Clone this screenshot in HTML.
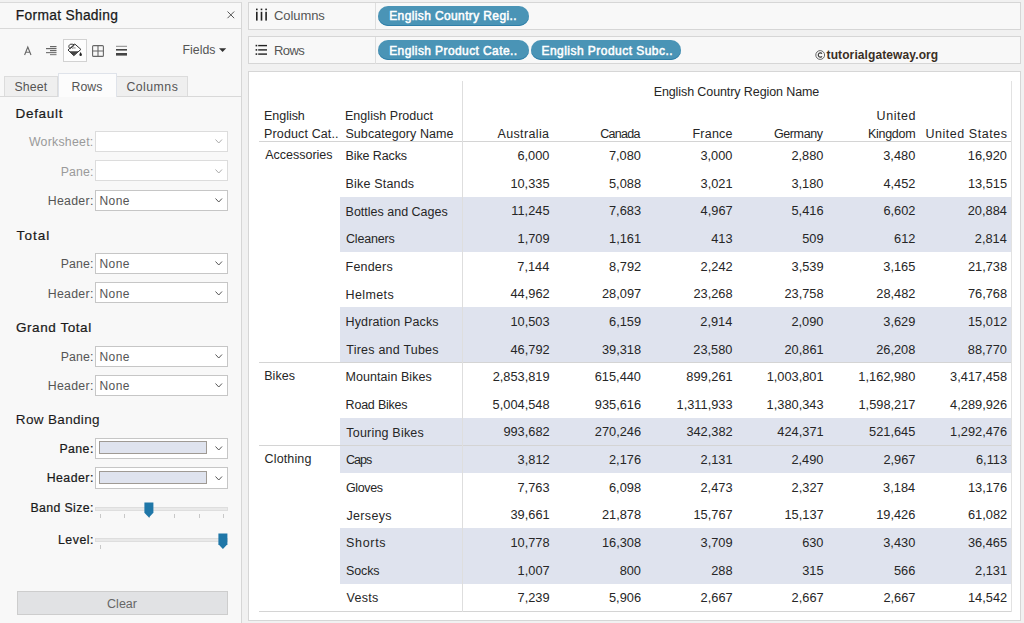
<!DOCTYPE html>
<html><head><meta charset="utf-8"><style>
html,body{margin:0;padding:0;}
body{width:1024px;height:623px;position:relative;overflow:hidden;background:#f1f1f1;font-family:"Liberation Sans", sans-serif;}
.t{position:absolute;white-space:nowrap;font-family:"Liberation Sans", sans-serif;}
.b{position:absolute;}
</style></head><body>
<div class="b" style="left:0px;top:1.5px;width:242.00px;height:621.50px;background:#f8f8f8;border-top:1px solid #dadada;border-right:1px solid #d6d6d6;box-sizing:border-box;"></div><div class="b" style="left:0px;top:28px;width:241.00px;height:1.00px;background:#d9d9d9;"></div><div class="t" style="left:15.86px;top:8.54px;font-size:13.8px;line-height:13.8px;color:#1a1a1a;font-weight:400;letter-spacing:0.293px;-webkit-text-stroke:0.25px #1a1a1a;">Format Shading</div><svg class="b" style="left:226px;top:10px" width="10" height="10" viewBox="0 0 10 10"><path d="M1.5 1.5L8.2 8.2M8.2 1.5L1.5 8.2" stroke="#555" stroke-width="1"/></svg><svg class="b" style="left:22px;top:44px" width="12" height="13" viewBox="0 0 12 13"><path d="M2.6 11 L5.8 3.0 L9.0 11 M3.8 8.3 H7.8" fill="none" stroke="#666" stroke-width="1.1"/></svg><svg class="b" style="left:46px;top:45px" width="11" height="11" viewBox="0 0 11 11"><rect x="4" y="1" width="6.5" height="1.2" fill="#666"/><rect x="0" y="3" width="10.5" height="1.2" fill="#666"/><rect x="4" y="5" width="6.5" height="1.2" fill="#666"/><rect x="0" y="7" width="10.5" height="1.2" fill="#777"/><rect x="4" y="9" width="6.5" height="1.2" fill="#888"/></svg><div class="b" style="left:63px;top:39px;width:24.00px;height:23.00px;background:#fdfdfd;border:1px solid #d2d2d2;box-sizing:border-box;"></div><svg class="b" style="left:66px;top:42px" width="18" height="16" viewBox="0 0 18 16"><path d="M2 8 L8.8 2 L14.9 7.4 L7.8 13.7 Z" fill="#fff" stroke="#333" stroke-width="1"/><path d="M3.3 9.3 L12.8 9.3 L7.8 13.7 Z" fill="#444"/><path d="M4.2 6.6 C2 5.5 2.6 2.4 5 2.2 C6.4 2 7.4 2.4 8.2 2.8 M4.2 6.6 L8.4 3.2" fill="none" stroke="#333" stroke-width="1"/><path d="M6 6.4 Q7.5 5.6 9.6 6" fill="none" stroke="#666" stroke-width="0.8"/><path d="M14.6 10 C13.8 11.4 13.4 12.2 13.4 12.8 A1.25 1.25 0 0 0 15.9 12.8 C15.9 12.2 15.5 11.4 14.6 10 Z" fill="#222"/></svg><svg class="b" style="left:92px;top:44.5px" width="12" height="12" viewBox="0 0 12 12"><rect x="0.6" y="0.6" width="10.8" height="10.8" rx="1" fill="none" stroke="#666" stroke-width="1.1"/><path d="M6 0.6V11.4M0.6 6H11.4" stroke="#666" stroke-width="1.1"/></svg><svg class="b" style="left:116px;top:45px" width="11" height="11" viewBox="0 0 11 11"><rect x="0" y="0.8" width="11" height="1" fill="#888"/><rect x="0" y="4" width="11" height="1.6" fill="#444"/><rect x="0" y="8" width="11" height="2.6" fill="#444"/></svg><div class="t" style="left:182.49px;top:44.41px;font-size:12.3px;line-height:12.3px;color:#555;font-weight:400;letter-spacing:0.027px;">Fields</div><svg class="b" style="left:219px;top:48px" width="8" height="5" viewBox="0 0 8 5"><path d="M0 0.2H7.2L3.6 3.9Z" fill="#333"/></svg><div class="b" style="left:4px;top:76px;width:54.00px;height:21.00px;background:#efefef;border:1px solid #dcdcdc;border-bottom:none;box-sizing:border-box;"></div><div class="b" style="left:116px;top:76px;width:72.00px;height:21.00px;background:#efefef;border:1px solid #dcdcdc;border-bottom:none;box-sizing:border-box;"></div><div class="b" style="left:0px;top:96px;width:241.00px;height:1.00px;background:#d9d9d9;"></div><div class="b" style="left:58px;top:73px;width:59.00px;height:24.00px;background:#fcfcfc;border:1px solid #dfe3ea;border-bottom:none;box-sizing:border-box;"></div><div class="t" style="left:14.45px;top:81.21px;font-size:12.3px;line-height:12.3px;color:#555;font-weight:400;letter-spacing:0.128px;">Sheet</div><div class="t" style="left:71.49px;top:81.21px;font-size:12.3px;line-height:12.3px;color:#555;font-weight:400;letter-spacing:0.065px;">Rows</div><div class="t" style="left:126.39px;top:81.21px;font-size:12.3px;line-height:12.3px;color:#555;font-weight:400;letter-spacing:0.487px;">Columns</div><div class="t" style="left:15.59px;top:106.87px;font-size:13.5px;line-height:13.5px;color:#1a1a1a;font-weight:400;letter-spacing:0.676px;-webkit-text-stroke:0.22px #1a1a1a;">Default</div><div class="b" style="left:95px;top:130.5px;width:133.00px;height:21.30px;background:#fff;border:1px solid #dcdcdc;box-sizing:border-box;"></div><div class="t" style="left:28.94px;top:136.21px;font-size:12.3px;line-height:12.3px;color:#9a9a9a;font-weight:400;letter-spacing:0.264px;">Worksheet:</div><svg class="b" style="left:215px;top:139.0px" width="8" height="5" viewBox="0 0 8 5"><path d="M0.5 0.5L3.75 4L7 0.5" fill="none" stroke="#aaa" stroke-width="1"/></svg><div class="b" style="left:95px;top:160.2px;width:133.00px;height:21.30px;background:#fff;border:1px solid #dcdcdc;box-sizing:border-box;"></div><div class="t" style="left:60.79px;top:165.91px;font-size:12.3px;line-height:12.3px;color:#9a9a9a;font-weight:400;letter-spacing:0.097px;">Pane:</div><svg class="b" style="left:215px;top:168.7px" width="8" height="5" viewBox="0 0 8 5"><path d="M0.5 0.5L3.75 4L7 0.5" fill="none" stroke="#aaa" stroke-width="1"/></svg><div class="b" style="left:95px;top:189.5px;width:133.00px;height:21.30px;background:#fff;border:1px solid #c6c6c6;box-sizing:border-box;"></div><div class="t" style="left:47.69px;top:195.21px;font-size:12.3px;line-height:12.3px;color:#555;font-weight:400;letter-spacing:0.311px;">Header:</div><div class="t" style="left:99.51px;top:195.24px;font-size:12px;line-height:12px;color:#555;font-weight:400;letter-spacing:0.440px;">None</div><svg class="b" style="left:215px;top:198.0px" width="8" height="5" viewBox="0 0 8 5"><path d="M0.5 0.5L3.75 4L7 0.5" fill="none" stroke="#555" stroke-width="1"/></svg><div class="t" style="left:16.60px;top:228.87px;font-size:13.5px;line-height:13.5px;color:#1a1a1a;font-weight:400;letter-spacing:1.049px;-webkit-text-stroke:0.22px #1a1a1a;">Total</div><div class="b" style="left:95px;top:252.6px;width:133.00px;height:21.30px;background:#fff;border:1px solid #c6c6c6;box-sizing:border-box;"></div><div class="t" style="left:60.79px;top:258.31px;font-size:12.3px;line-height:12.3px;color:#555;font-weight:400;letter-spacing:0.097px;">Pane:</div><div class="t" style="left:99.51px;top:258.34px;font-size:12px;line-height:12px;color:#555;font-weight:400;letter-spacing:0.440px;">None</div><svg class="b" style="left:215px;top:261.1px" width="8" height="5" viewBox="0 0 8 5"><path d="M0.5 0.5L3.75 4L7 0.5" fill="none" stroke="#555" stroke-width="1"/></svg><div class="b" style="left:95px;top:282.2px;width:133.00px;height:21.30px;background:#fff;border:1px solid #c6c6c6;box-sizing:border-box;"></div><div class="t" style="left:47.69px;top:287.91px;font-size:12.3px;line-height:12.3px;color:#555;font-weight:400;letter-spacing:0.311px;">Header:</div><div class="t" style="left:99.51px;top:287.94px;font-size:12px;line-height:12px;color:#555;font-weight:400;letter-spacing:0.440px;">None</div><svg class="b" style="left:215px;top:290.7px" width="8" height="5" viewBox="0 0 8 5"><path d="M0.5 0.5L3.75 4L7 0.5" fill="none" stroke="#555" stroke-width="1"/></svg><div class="t" style="left:15.93px;top:320.87px;font-size:13.5px;line-height:13.5px;color:#1a1a1a;font-weight:400;letter-spacing:0.573px;-webkit-text-stroke:0.22px #1a1a1a;">Grand Total</div><div class="b" style="left:95px;top:345.5px;width:133.00px;height:21.30px;background:#fff;border:1px solid #c6c6c6;box-sizing:border-box;"></div><div class="t" style="left:60.79px;top:351.21px;font-size:12.3px;line-height:12.3px;color:#555;font-weight:400;letter-spacing:0.097px;">Pane:</div><div class="t" style="left:99.51px;top:351.24px;font-size:12px;line-height:12px;color:#555;font-weight:400;letter-spacing:0.440px;">None</div><svg class="b" style="left:215px;top:354.0px" width="8" height="5" viewBox="0 0 8 5"><path d="M0.5 0.5L3.75 4L7 0.5" fill="none" stroke="#555" stroke-width="1"/></svg><div class="b" style="left:95px;top:374.7px;width:133.00px;height:21.30px;background:#fff;border:1px solid #c6c6c6;box-sizing:border-box;"></div><div class="t" style="left:47.69px;top:380.41px;font-size:12.3px;line-height:12.3px;color:#555;font-weight:400;letter-spacing:0.311px;">Header:</div><div class="t" style="left:99.51px;top:380.44px;font-size:12px;line-height:12px;color:#555;font-weight:400;letter-spacing:0.440px;">None</div><svg class="b" style="left:215px;top:383.2px" width="8" height="5" viewBox="0 0 8 5"><path d="M0.5 0.5L3.75 4L7 0.5" fill="none" stroke="#555" stroke-width="1"/></svg><div class="t" style="left:15.79px;top:413.37px;font-size:13.5px;line-height:13.5px;color:#1a1a1a;font-weight:400;letter-spacing:0.347px;-webkit-text-stroke:0.1px #1a1a1a;">Row Banding</div><div class="b" style="left:95px;top:437.6px;width:133.00px;height:21.30px;background:#fff;border:1px solid #c6c6c6;box-sizing:border-box;"></div><div class="t" style="left:59.39px;top:442.71px;font-size:12.3px;line-height:12.3px;color:#1a1a1a;font-weight:400;letter-spacing:0.447px;-webkit-text-stroke:0.22px #1a1a1a;">Pane:</div><div class="b" style="left:99px;top:441.20000000000005px;width:108.00px;height:13.00px;background:#dfe3ee;border:1px solid #9f9a94;box-sizing:border-box;"></div><svg class="b" style="left:215px;top:446.1px" width="8" height="5" viewBox="0 0 8 5"><path d="M0.5 0.5L3.75 4L7 0.5" fill="none" stroke="#555" stroke-width="1"/></svg><div class="b" style="left:95px;top:467.3px;width:133.00px;height:21.30px;background:#fff;border:1px solid #c6c6c6;box-sizing:border-box;"></div><div class="t" style="left:46.69px;top:472.41px;font-size:12.3px;line-height:12.3px;color:#1a1a1a;font-weight:400;letter-spacing:0.477px;-webkit-text-stroke:0.22px #1a1a1a;">Header:</div><div class="b" style="left:99px;top:470.90000000000003px;width:108.00px;height:13.00px;background:#dfe3ee;border:1px solid #9f9a94;box-sizing:border-box;"></div><svg class="b" style="left:215px;top:475.8px" width="8" height="5" viewBox="0 0 8 5"><path d="M0.5 0.5L3.75 4L7 0.5" fill="none" stroke="#555" stroke-width="1"/></svg><div class="t" style="left:30.49px;top:502.31px;font-size:12.3px;line-height:12.3px;color:#1a1a1a;font-weight:400;letter-spacing:0.383px;-webkit-text-stroke:0.22px #1a1a1a;">Band Size:</div><div class="b" style="left:95px;top:506.5px;width:133.00px;height:4.20px;background:#e9e9e9;border:1px solid #dedede;box-sizing:border-box;"></div><div class="b" style="left:100px;top:514px;width:1.00px;height:4.00px;background:#c8c8c8;"></div><div class="b" style="left:124.4px;top:514px;width:1.00px;height:4.00px;background:#c8c8c8;"></div><div class="b" style="left:149px;top:514px;width:1.00px;height:4.00px;background:#c8c8c8;"></div><div class="b" style="left:174.3px;top:514px;width:1.00px;height:4.00px;background:#c8c8c8;"></div><div class="b" style="left:198.6px;top:514px;width:1.00px;height:4.00px;background:#c8c8c8;"></div><div class="b" style="left:223px;top:514px;width:1.00px;height:4.00px;background:#c8c8c8;"></div><svg class="b" style="left:144px;top:501.5px" width="10" height="17" viewBox="0 0 10 17"><path d="M0.4 0.4H9.4V10.8L4.9 15.5L0.4 10.8Z" fill="#1f77a8"/></svg><div class="t" style="left:57.99px;top:533.91px;font-size:12.3px;line-height:12.3px;color:#1a1a1a;font-weight:400;letter-spacing:0.522px;-webkit-text-stroke:0.22px #1a1a1a;">Level:</div><div class="b" style="left:95px;top:538px;width:133.00px;height:4.20px;background:#e9e9e9;border:1px solid #dedede;box-sizing:border-box;"></div><div class="b" style="left:100px;top:545px;width:1.00px;height:4.00px;background:#c8c8c8;"></div><svg class="b" style="left:218.3px;top:532.8px" width="10" height="17" viewBox="0 0 10 17"><path d="M0.4 0.4H9.4V11.2L4.9 15.9L0.4 11.2Z" fill="#1f77a8"/></svg><div class="b" style="left:17px;top:591px;width:211.00px;height:24.00px;background:#e1e2e4;border:1px solid #cdcdcd;box-sizing:border-box;"></div><div class="t" style="left:107.12px;top:598.00px;font-size:12.5px;line-height:12.5px;color:#666;font-weight:400;letter-spacing:-0.016px;">Clear</div><div class="b" style="left:248px;top:2px;width:773.00px;height:27.50px;background:#f8f8f8;border:1px solid #d6d6d6;box-sizing:border-box;"></div><div class="b" style="left:375px;top:2.5px;width:1.00px;height:26.50px;background:#dedede;"></div><div class="b" style="left:248px;top:36.3px;width:773.00px;height:27.90px;background:#f8f8f8;border:1px solid #d6d6d6;box-sizing:border-box;"></div><div class="b" style="left:375px;top:37px;width:1.00px;height:26.50px;background:#dedede;"></div><svg class="b" style="left:255px;top:8px" width="13" height="14" viewBox="0 0 13 14"><rect x="1" y="0.6" width="1.6" height="1.6" fill="#222"/><rect x="5.7" y="0.6" width="1.6" height="1.6" fill="#222"/><rect x="10.3" y="0.6" width="1.6" height="1.6" fill="#222"/><rect x="1" y="3.8" width="1.6" height="8.8" fill="#222"/><rect x="5.7" y="3.8" width="1.6" height="8.8" fill="#222"/><rect x="10.3" y="3.8" width="1.6" height="8.8" fill="#222"/></svg><div class="t" style="left:274.05px;top:9.46px;font-size:13px;line-height:13px;color:#555;font-weight:400;letter-spacing:-0.080px;">Columns</div><svg class="b" style="left:255px;top:43.5px" width="13" height="12" viewBox="0 0 13 12"><rect x="0.6" y="0.8" width="1.6" height="1.6" fill="#222"/><rect x="3.2" y="0.9" width="8.8" height="1.4" fill="#222"/><rect x="0.6" y="5.1" width="1.6" height="1.6" fill="#222"/><rect x="3.2" y="5.2" width="8.8" height="1.4" fill="#222"/><rect x="0.6" y="9.3" width="1.6" height="1.6" fill="#222"/><rect x="3.2" y="9.4" width="8.8" height="1.4" fill="#222"/></svg><div class="t" style="left:273.93px;top:44.16px;font-size:13px;line-height:13px;color:#555;font-weight:400;letter-spacing:-0.524px;">Rows</div><div class="b" style="left:378.4px;top:6px;width:150.60px;height:19.80px;background:#4a94b6;border-radius:10px;box-shadow:inset 0 -1px 0 #2f7fa8;"></div><div class="t" style="left:389.21px;top:10.24px;font-size:12.0px;line-height:12.0px;color:#fff;font-weight:400;letter-spacing:0.380px;-webkit-text-stroke:0.5px #fff;">English Country Regi..</div><div class="b" style="left:378.4px;top:40.3px;width:150.60px;height:19.90px;background:#4a94b6;border-radius:10px;box-shadow:inset 0 -1px 0 #2f7fa8;"></div><div class="t" style="left:389.21px;top:44.54px;font-size:12.0px;line-height:12.0px;color:#fff;font-weight:400;letter-spacing:0.403px;-webkit-text-stroke:0.5px #fff;">English Product Cate..</div><div class="b" style="left:531px;top:40.3px;width:150.30px;height:19.90px;background:#4a94b6;border-radius:10px;box-shadow:inset 0 -1px 0 #2f7fa8;"></div><div class="t" style="left:541.51px;top:44.54px;font-size:12.0px;line-height:12.0px;color:#fff;font-weight:400;letter-spacing:0.460px;-webkit-text-stroke:0.5px #fff;">English Product Subc..</div><svg class="b" style="left:815px;top:49.5px" width="11" height="11" viewBox="0 0 11 11"><circle cx="5.2" cy="5" r="4.4" fill="none" stroke="#555" stroke-width="0.9"/><path d="M7 3.7 A2.1 2.1 0 1 0 7 6.3" fill="none" stroke="#333" stroke-width="1.1"/></svg><div class="t" style="left:826.55px;top:48.84px;font-size:12.0px;line-height:12.0px;color:#3a2f25;font-weight:700;letter-spacing:0.102px;">tutorialgateway.org</div><div class="b" style="left:248px;top:71px;width:773.00px;height:550.00px;background:#fff;border:1px solid #d6d6d6;box-sizing:border-box;"></div><div class="b" style="left:340px;top:196.85999999999999px;width:670.60px;height:27.63px;background:#dfe3ee;"></div><div class="b" style="left:340px;top:224.49px;width:670.60px;height:27.63px;background:#dfe3ee;"></div><div class="b" style="left:340px;top:307.38px;width:670.60px;height:27.63px;background:#dfe3ee;"></div><div class="b" style="left:340px;top:335.01px;width:670.60px;height:27.63px;background:#dfe3ee;"></div><div class="b" style="left:340px;top:417.9px;width:670.60px;height:27.63px;background:#dfe3ee;"></div><div class="b" style="left:340px;top:445.53px;width:670.60px;height:27.63px;background:#dfe3ee;"></div><div class="b" style="left:340px;top:528.42px;width:670.60px;height:27.63px;background:#dfe3ee;"></div><div class="b" style="left:340px;top:556.05px;width:670.60px;height:27.63px;background:#dfe3ee;"></div><div class="b" style="left:258.5px;top:141.1px;width:752.50px;height:1.00px;background:#d4d4d4;"></div><div class="b" style="left:258.5px;top:362.14px;width:752.50px;height:1.00px;background:#d4d4d4;"></div><div class="b" style="left:258.5px;top:445.03px;width:752.50px;height:1.00px;background:#d4d4d4;"></div><div class="b" style="left:258.5px;top:610.81px;width:752.50px;height:1.00px;background:#d4d4d4;"></div><div class="b" style="left:461.6px;top:81px;width:1.00px;height:530.50px;background:#dedede;"></div><div class="b" style="left:1010.5px;top:81px;width:1.00px;height:530.50px;background:#e2e2e2;"></div><div class="t" style="left:653.67px;top:86.25px;font-size:12.5px;line-height:12.5px;color:#262626;font-weight:400;letter-spacing:-0.095px;">English Country Region Name</div><div class="t" style="left:264.07px;top:110.15px;font-size:12.5px;line-height:12.5px;color:#262626;font-weight:400;letter-spacing:-0.043px;">English</div><div class="t" style="left:264.07px;top:127.85px;font-size:12.5px;line-height:12.5px;color:#262626;font-weight:400;letter-spacing:0.127px;">Product Cat..</div><div class="t" style="left:344.97px;top:110.45px;font-size:12.5px;line-height:12.5px;color:#262626;font-weight:400;letter-spacing:0.040px;">English Product</div><div class="t" style="left:345.44px;top:128.25px;font-size:12.5px;line-height:12.5px;color:#262626;font-weight:400;letter-spacing:0.073px;">Subcategory Name</div><div class="t" style="left:497.47px;top:128.25px;font-size:12.5px;line-height:12.5px;color:#262626;font-weight:400;letter-spacing:0.359px;">Australia</div><div class="t" style="left:600.17px;top:128.25px;font-size:12.5px;line-height:12.5px;color:#262626;font-weight:400;letter-spacing:-0.697px;">Canada</div><div class="t" style="left:692.47px;top:128.25px;font-size:12.5px;line-height:12.5px;color:#262626;font-weight:400;letter-spacing:0.237px;">France</div><div class="t" style="left:773.88px;top:128.25px;font-size:12.5px;line-height:12.5px;color:#262626;font-weight:400;letter-spacing:-0.375px;">Germany</div><div class="t" style="left:867.97px;top:128.25px;font-size:12.5px;line-height:12.5px;color:#262626;font-weight:400;letter-spacing:-0.283px;">Kingdom</div><div class="t" style="left:925.43px;top:128.25px;font-size:12.5px;line-height:12.5px;color:#262626;font-weight:400;letter-spacing:0.540px;">United States</div><div class="t" style="left:876.53px;top:110.45px;font-size:12.5px;line-height:12.5px;color:#262626;font-weight:400;letter-spacing:0.585px;">United</div><div class="t" style="left:265.17px;top:149.15px;font-size:12.5px;line-height:12.5px;color:#262626;font-weight:400;">Accessories</div><div class="t" style="left:345.57px;top:150.45px;font-size:12.5px;line-height:12.5px;color:#262626;font-weight:400;letter-spacing:-0.118px;">Bike Racks</div><div class="t" style="left:517.45px;top:150.22px;font-size:12.8px;line-height:12.8px;color:#262626;font-weight:400;">6,000</div><div class="t" style="left:608.95px;top:150.22px;font-size:12.8px;line-height:12.8px;color:#262626;font-weight:400;">7,080</div><div class="t" style="left:700.45px;top:150.22px;font-size:12.8px;line-height:12.8px;color:#262626;font-weight:400;">3,000</div><div class="t" style="left:791.45px;top:150.22px;font-size:12.8px;line-height:12.8px;color:#262626;font-weight:400;">2,880</div><div class="t" style="left:883.25px;top:150.22px;font-size:12.8px;line-height:12.8px;color:#262626;font-weight:400;">3,480</div><div class="t" style="left:967.84px;top:150.22px;font-size:12.8px;line-height:12.8px;color:#262626;font-weight:400;">16,920</div><div class="t" style="left:345.57px;top:178.07px;font-size:12.5px;line-height:12.5px;color:#262626;font-weight:400;letter-spacing:0.175px;">Bike Stands</div><div class="t" style="left:510.38px;top:177.84px;font-size:12.8px;line-height:12.8px;color:#262626;font-weight:400;">10,335</div><div class="t" style="left:609.01px;top:177.84px;font-size:12.8px;line-height:12.8px;color:#262626;font-weight:400;">5,088</div><div class="t" style="left:700.58px;top:177.84px;font-size:12.8px;line-height:12.8px;color:#262626;font-weight:400;">3,021</div><div class="t" style="left:791.45px;top:177.84px;font-size:12.8px;line-height:12.8px;color:#262626;font-weight:400;">3,180</div><div class="t" style="left:883.41px;top:177.84px;font-size:12.8px;line-height:12.8px;color:#262626;font-weight:400;">4,452</div><div class="t" style="left:967.88px;top:177.84px;font-size:12.8px;line-height:12.8px;color:#262626;font-weight:400;">13,515</div><div class="t" style="left:345.57px;top:205.70px;font-size:12.5px;line-height:12.5px;color:#262626;font-weight:400;">Bottles and Cages</div><div class="t" style="left:511.34px;top:205.47px;font-size:12.8px;line-height:12.8px;color:#262626;font-weight:400;">11,245</div><div class="t" style="left:609.01px;top:205.47px;font-size:12.8px;line-height:12.8px;color:#262626;font-weight:400;">7,683</div><div class="t" style="left:700.61px;top:205.47px;font-size:12.8px;line-height:12.8px;color:#262626;font-weight:400;">4,967</div><div class="t" style="left:791.51px;top:205.47px;font-size:12.8px;line-height:12.8px;color:#262626;font-weight:400;">5,416</div><div class="t" style="left:883.41px;top:205.47px;font-size:12.8px;line-height:12.8px;color:#262626;font-weight:400;">6,602</div><div class="t" style="left:967.72px;top:205.47px;font-size:12.8px;line-height:12.8px;color:#262626;font-weight:400;">20,884</div><div class="t" style="left:345.98px;top:233.32px;font-size:12.5px;line-height:12.5px;color:#262626;font-weight:400;letter-spacing:-0.181px;">Cleaners</div><div class="t" style="left:517.54px;top:233.09px;font-size:12.8px;line-height:12.8px;color:#262626;font-weight:400;">1,709</div><div class="t" style="left:609.08px;top:233.09px;font-size:12.8px;line-height:12.8px;color:#262626;font-weight:400;">1,161</div><div class="t" style="left:711.20px;top:233.09px;font-size:12.8px;line-height:12.8px;color:#262626;font-weight:400;">413</div><div class="t" style="left:802.23px;top:233.09px;font-size:12.8px;line-height:12.8px;color:#262626;font-weight:400;">509</div><div class="t" style="left:894.10px;top:233.09px;font-size:12.8px;line-height:12.8px;color:#262626;font-weight:400;">612</div><div class="t" style="left:974.82px;top:233.09px;font-size:12.8px;line-height:12.8px;color:#262626;font-weight:400;">2,814</div><div class="t" style="left:345.57px;top:260.95px;font-size:12.5px;line-height:12.5px;color:#262626;font-weight:400;letter-spacing:0.204px;">Fenders</div><div class="t" style="left:517.32px;top:260.72px;font-size:12.8px;line-height:12.8px;color:#262626;font-weight:400;">7,144</div><div class="t" style="left:609.11px;top:260.72px;font-size:12.8px;line-height:12.8px;color:#262626;font-weight:400;">8,792</div><div class="t" style="left:700.61px;top:260.72px;font-size:12.8px;line-height:12.8px;color:#262626;font-weight:400;">2,242</div><div class="t" style="left:791.54px;top:260.72px;font-size:12.8px;line-height:12.8px;color:#262626;font-weight:400;">3,539</div><div class="t" style="left:883.28px;top:260.72px;font-size:12.8px;line-height:12.8px;color:#262626;font-weight:400;">3,165</div><div class="t" style="left:967.91px;top:260.72px;font-size:12.8px;line-height:12.8px;color:#262626;font-weight:400;">21,738</div><div class="t" style="left:345.57px;top:288.57px;font-size:12.5px;line-height:12.5px;color:#262626;font-weight:400;letter-spacing:0.387px;">Helmets</div><div class="t" style="left:510.50px;top:288.34px;font-size:12.8px;line-height:12.8px;color:#262626;font-weight:400;">44,962</div><div class="t" style="left:602.00px;top:288.34px;font-size:12.8px;line-height:12.8px;color:#262626;font-weight:400;">28,097</div><div class="t" style="left:693.41px;top:288.34px;font-size:12.8px;line-height:12.8px;color:#262626;font-weight:400;">23,268</div><div class="t" style="left:784.41px;top:288.34px;font-size:12.8px;line-height:12.8px;color:#262626;font-weight:400;">23,758</div><div class="t" style="left:876.30px;top:288.34px;font-size:12.8px;line-height:12.8px;color:#262626;font-weight:400;">28,482</div><div class="t" style="left:967.91px;top:288.34px;font-size:12.8px;line-height:12.8px;color:#262626;font-weight:400;">76,768</div><div class="t" style="left:345.57px;top:316.20px;font-size:12.5px;line-height:12.5px;color:#262626;font-weight:400;letter-spacing:0.141px;">Hydration Packs</div><div class="t" style="left:510.41px;top:315.97px;font-size:12.8px;line-height:12.8px;color:#262626;font-weight:400;">10,503</div><div class="t" style="left:609.04px;top:315.97px;font-size:12.8px;line-height:12.8px;color:#262626;font-weight:400;">6,159</div><div class="t" style="left:700.32px;top:315.97px;font-size:12.8px;line-height:12.8px;color:#262626;font-weight:400;">2,914</div><div class="t" style="left:791.45px;top:315.97px;font-size:12.8px;line-height:12.8px;color:#262626;font-weight:400;">2,090</div><div class="t" style="left:883.34px;top:315.97px;font-size:12.8px;line-height:12.8px;color:#262626;font-weight:400;">3,629</div><div class="t" style="left:968.00px;top:315.97px;font-size:12.8px;line-height:12.8px;color:#262626;font-weight:400;">15,012</div><div class="t" style="left:346.32px;top:343.82px;font-size:12.5px;line-height:12.5px;color:#262626;font-weight:400;letter-spacing:0.219px;">Tires and Tubes</div><div class="t" style="left:510.50px;top:343.59px;font-size:12.8px;line-height:12.8px;color:#262626;font-weight:400;">46,792</div><div class="t" style="left:601.91px;top:343.59px;font-size:12.8px;line-height:12.8px;color:#262626;font-weight:400;">39,318</div><div class="t" style="left:693.34px;top:343.59px;font-size:12.8px;line-height:12.8px;color:#262626;font-weight:400;">23,580</div><div class="t" style="left:784.47px;top:343.59px;font-size:12.8px;line-height:12.8px;color:#262626;font-weight:400;">20,861</div><div class="t" style="left:876.21px;top:343.59px;font-size:12.8px;line-height:12.8px;color:#262626;font-weight:400;">26,208</div><div class="t" style="left:967.84px;top:343.59px;font-size:12.8px;line-height:12.8px;color:#262626;font-weight:400;">88,770</div><div class="t" style="left:264.17px;top:370.15px;font-size:12.5px;line-height:12.5px;color:#262626;font-weight:400;letter-spacing:0.077px;">Bikes</div><div class="t" style="left:345.57px;top:371.45px;font-size:12.5px;line-height:12.5px;color:#262626;font-weight:400;letter-spacing:0.054px;">Mountain Bikes</div><div class="t" style="left:492.65px;top:371.22px;font-size:12.8px;line-height:12.8px;color:#262626;font-weight:400;">2,853,819</div><div class="t" style="left:594.74px;top:371.22px;font-size:12.8px;line-height:12.8px;color:#262626;font-weight:400;">615,440</div><div class="t" style="left:686.37px;top:371.22px;font-size:12.8px;line-height:12.8px;color:#262626;font-weight:400;">899,261</div><div class="t" style="left:766.68px;top:371.22px;font-size:12.8px;line-height:12.8px;color:#262626;font-weight:400;">1,003,801</div><div class="t" style="left:858.35px;top:371.22px;font-size:12.8px;line-height:12.8px;color:#262626;font-weight:400;">1,162,980</div><div class="t" style="left:950.12px;top:371.22px;font-size:12.8px;line-height:12.8px;color:#262626;font-weight:400;">3,417,458</div><div class="t" style="left:345.57px;top:399.07px;font-size:12.5px;line-height:12.5px;color:#262626;font-weight:400;letter-spacing:-0.208px;">Road Bikes</div><div class="t" style="left:492.62px;top:398.84px;font-size:12.8px;line-height:12.8px;color:#262626;font-weight:400;">5,004,548</div><div class="t" style="left:594.80px;top:398.84px;font-size:12.8px;line-height:12.8px;color:#262626;font-weight:400;">935,616</div><div class="t" style="left:676.58px;top:398.84px;font-size:12.8px;line-height:12.8px;color:#262626;font-weight:400;">1,311,933</div><div class="t" style="left:766.62px;top:398.84px;font-size:12.8px;line-height:12.8px;color:#262626;font-weight:400;">1,380,343</div><div class="t" style="left:858.51px;top:398.84px;font-size:12.8px;line-height:12.8px;color:#262626;font-weight:400;">1,598,217</div><div class="t" style="left:950.12px;top:398.84px;font-size:12.8px;line-height:12.8px;color:#262626;font-weight:400;">4,289,926</div><div class="t" style="left:346.32px;top:426.70px;font-size:12.5px;line-height:12.5px;color:#262626;font-weight:400;letter-spacing:0.199px;">Touring Bikes</div><div class="t" style="left:503.40px;top:426.47px;font-size:12.8px;line-height:12.8px;color:#262626;font-weight:400;">993,682</div><div class="t" style="left:594.80px;top:426.47px;font-size:12.8px;line-height:12.8px;color:#262626;font-weight:400;">270,246</div><div class="t" style="left:686.40px;top:426.47px;font-size:12.8px;line-height:12.8px;color:#262626;font-weight:400;">342,382</div><div class="t" style="left:777.37px;top:426.47px;font-size:12.8px;line-height:12.8px;color:#262626;font-weight:400;">424,371</div><div class="t" style="left:869.07px;top:426.47px;font-size:12.8px;line-height:12.8px;color:#262626;font-weight:400;">521,645</div><div class="t" style="left:950.12px;top:426.47px;font-size:12.8px;line-height:12.8px;color:#262626;font-weight:400;">1,292,476</div><div class="t" style="left:264.57px;top:453.02px;font-size:12.5px;line-height:12.5px;color:#262626;font-weight:400;letter-spacing:0.137px;">Clothing</div><div class="t" style="left:345.98px;top:454.32px;font-size:12.5px;line-height:12.5px;color:#262626;font-weight:400;letter-spacing:-0.942px;">Caps</div><div class="t" style="left:517.61px;top:454.09px;font-size:12.8px;line-height:12.8px;color:#262626;font-weight:400;">3,812</div><div class="t" style="left:609.01px;top:454.09px;font-size:12.8px;line-height:12.8px;color:#262626;font-weight:400;">2,176</div><div class="t" style="left:700.58px;top:454.09px;font-size:12.8px;line-height:12.8px;color:#262626;font-weight:400;">2,131</div><div class="t" style="left:791.45px;top:454.09px;font-size:12.8px;line-height:12.8px;color:#262626;font-weight:400;">2,490</div><div class="t" style="left:883.41px;top:454.09px;font-size:12.8px;line-height:12.8px;color:#262626;font-weight:400;">2,967</div><div class="t" style="left:975.97px;top:454.09px;font-size:12.8px;line-height:12.8px;color:#262626;font-weight:400;">6,113</div><div class="t" style="left:345.98px;top:481.95px;font-size:12.5px;line-height:12.5px;color:#262626;font-weight:400;letter-spacing:-0.369px;">Gloves</div><div class="t" style="left:517.51px;top:481.72px;font-size:12.8px;line-height:12.8px;color:#262626;font-weight:400;">7,763</div><div class="t" style="left:609.01px;top:481.72px;font-size:12.8px;line-height:12.8px;color:#262626;font-weight:400;">6,098</div><div class="t" style="left:700.51px;top:481.72px;font-size:12.8px;line-height:12.8px;color:#262626;font-weight:400;">2,473</div><div class="t" style="left:791.61px;top:481.72px;font-size:12.8px;line-height:12.8px;color:#262626;font-weight:400;">2,327</div><div class="t" style="left:883.12px;top:481.72px;font-size:12.8px;line-height:12.8px;color:#262626;font-weight:400;">3,184</div><div class="t" style="left:967.91px;top:481.72px;font-size:12.8px;line-height:12.8px;color:#262626;font-weight:400;">13,176</div><div class="t" style="left:346.41px;top:509.58px;font-size:12.5px;line-height:12.5px;color:#262626;font-weight:400;letter-spacing:0.344px;">Jerseys</div><div class="t" style="left:510.47px;top:509.34px;font-size:12.8px;line-height:12.8px;color:#262626;font-weight:400;">39,661</div><div class="t" style="left:601.91px;top:509.34px;font-size:12.8px;line-height:12.8px;color:#262626;font-weight:400;">21,878</div><div class="t" style="left:693.50px;top:509.34px;font-size:12.8px;line-height:12.8px;color:#262626;font-weight:400;">15,767</div><div class="t" style="left:784.50px;top:509.34px;font-size:12.8px;line-height:12.8px;color:#262626;font-weight:400;">15,137</div><div class="t" style="left:876.21px;top:509.34px;font-size:12.8px;line-height:12.8px;color:#262626;font-weight:400;">19,426</div><div class="t" style="left:968.00px;top:509.34px;font-size:12.8px;line-height:12.8px;color:#262626;font-weight:400;">61,082</div><div class="t" style="left:346.04px;top:537.20px;font-size:12.5px;line-height:12.5px;color:#262626;font-weight:400;letter-spacing:0.675px;">Shorts</div><div class="t" style="left:510.41px;top:536.97px;font-size:12.8px;line-height:12.8px;color:#262626;font-weight:400;">10,778</div><div class="t" style="left:601.91px;top:536.97px;font-size:12.8px;line-height:12.8px;color:#262626;font-weight:400;">16,308</div><div class="t" style="left:700.54px;top:536.97px;font-size:12.8px;line-height:12.8px;color:#262626;font-weight:400;">3,709</div><div class="t" style="left:802.14px;top:536.97px;font-size:12.8px;line-height:12.8px;color:#262626;font-weight:400;">630</div><div class="t" style="left:883.25px;top:536.97px;font-size:12.8px;line-height:12.8px;color:#262626;font-weight:400;">3,430</div><div class="t" style="left:967.88px;top:536.97px;font-size:12.8px;line-height:12.8px;color:#262626;font-weight:400;">36,465</div><div class="t" style="left:346.04px;top:564.83px;font-size:12.5px;line-height:12.5px;color:#262626;font-weight:400;letter-spacing:-0.133px;">Socks</div><div class="t" style="left:517.61px;top:564.59px;font-size:12.8px;line-height:12.8px;color:#262626;font-weight:400;">1,007</div><div class="t" style="left:619.64px;top:564.59px;font-size:12.8px;line-height:12.8px;color:#262626;font-weight:400;">800</div><div class="t" style="left:711.20px;top:564.59px;font-size:12.8px;line-height:12.8px;color:#262626;font-weight:400;">288</div><div class="t" style="left:802.17px;top:564.59px;font-size:12.8px;line-height:12.8px;color:#262626;font-weight:400;">315</div><div class="t" style="left:894.00px;top:564.59px;font-size:12.8px;line-height:12.8px;color:#262626;font-weight:400;">566</div><div class="t" style="left:975.08px;top:564.59px;font-size:12.8px;line-height:12.8px;color:#262626;font-weight:400;">2,131</div><div class="t" style="left:346.54px;top:592.45px;font-size:12.5px;line-height:12.5px;color:#262626;font-weight:400;letter-spacing:0.309px;">Vests</div><div class="t" style="left:517.54px;top:592.22px;font-size:12.8px;line-height:12.8px;color:#262626;font-weight:400;">7,239</div><div class="t" style="left:609.01px;top:592.22px;font-size:12.8px;line-height:12.8px;color:#262626;font-weight:400;">5,906</div><div class="t" style="left:700.61px;top:592.22px;font-size:12.8px;line-height:12.8px;color:#262626;font-weight:400;">2,667</div><div class="t" style="left:791.61px;top:592.22px;font-size:12.8px;line-height:12.8px;color:#262626;font-weight:400;">2,667</div><div class="t" style="left:883.41px;top:592.22px;font-size:12.8px;line-height:12.8px;color:#262626;font-weight:400;">2,667</div><div class="t" style="left:968.00px;top:592.22px;font-size:12.8px;line-height:12.8px;color:#262626;font-weight:400;">14,542</div>
</body></html>
